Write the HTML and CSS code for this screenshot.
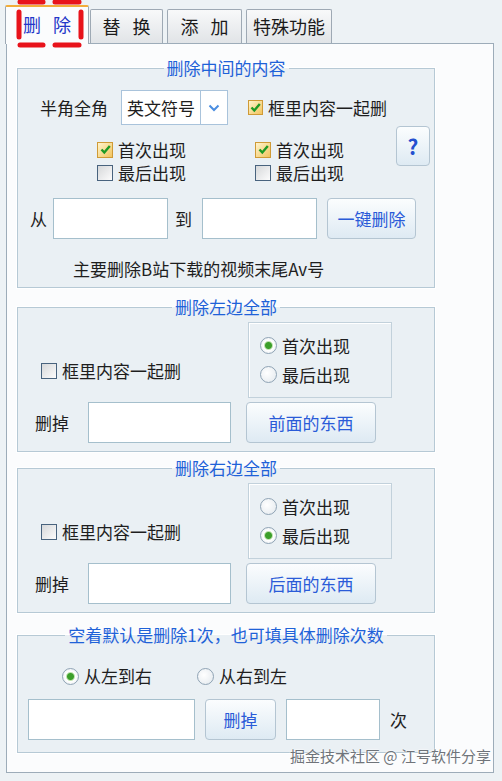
FILE: index.html
```html
<!DOCTYPE html>
<html lang="zh-CN">
<head>
    <meta charset="UTF-8">
    <meta name="viewport" content="width=device-width, initial-scale=1.0">
    <title>删除</title>
    <link rel="stylesheet" href="styles.css">
</head>
<body>
    <div class="window">
        <div class="tabs">
            <div class="tab active">删 除</div>
            <div class="tab tab-replace">替 换</div>
            <div class="tab tab-add">添 加</div>
            <div class="tab tab-special">特殊功能</div>
            <svg class="mark" width="84" height="50" viewBox="0 0 84 50">
                <g stroke="#e8131b" stroke-width="5" stroke-linecap="round" fill="none">
                    <line x1="12" y1="2" x2="35" y2="2"/>
                    <line x1="47" y1="2" x2="71" y2="2"/>
                    <line x1="12" y1="45" x2="35" y2="45"/>
                    <line x1="47" y1="45" x2="71" y2="45"/>
                    <line x1="11" y1="12" x2="11" y2="37"/>
                    <line x1="73" y1="12" x2="73" y2="37"/>
                </g>
            </svg>
        </div>

        <div class="panel">
            <!-- 删除中间 -->
            <fieldset class="group group-middle">
                <legend>删除中间的内容</legend>
                <div class="row row-mode">
                    <span class="label label-mode">半角全角</span>
                    <div class="select">
                        <span class="select-text">英文符号</span>
                        <span class="select-btn">
                            <svg width="12" height="8" viewBox="0 0 12 8"><path d="M1.5 1.5 L6 6 L10.5 1.5" stroke="#4a8de0" stroke-width="2" fill="none"/></svg>
                        </span>
                    </div>
                    <label class="check check-all">
                        <span class="box checked"><svg width="13" height="13" viewBox="0 0 13 13"><path d="M2.5 6.5 L5.3 9.5 L10.8 3" stroke="#1f9a25" stroke-width="2.4" fill="none"/></svg></span>框里内容一起删
                    </label>
                </div>
                <div class="row row-occur">
                    <div class="occur-col occur-left">
                        <label class="check">
                            <span class="box checked"><svg width="13" height="13" viewBox="0 0 13 13"><path d="M2.5 6.5 L5.3 9.5 L10.8 3" stroke="#1f9a25" stroke-width="2.4" fill="none"/></svg></span>首次出现
                        </label>
                        <label class="check"><span class="box"></span>最后出现</label>
                    </div>
                    <div class="occur-col occur-right">
                        <label class="check">
                            <span class="box checked"><svg width="13" height="13" viewBox="0 0 13 13"><path d="M2.5 6.5 L5.3 9.5 L10.8 3" stroke="#1f9a25" stroke-width="2.4" fill="none"/></svg></span>首次出现
                        </label>
                        <label class="check"><span class="box"></span>最后出现</label>
                    </div>
                    <button class="btn btn-help">?</button>
                </div>
                <div class="row row-range">
                    <span class="label label-from">从</span>
                    <input type="text" class="field field-from">
                    <span class="label label-to">到</span>
                    <input type="text" class="field field-to">
                    <button class="btn btn-onekey">一键删除</button>
                </div>
                <p class="note">主要删除B站下载的视频末尾Av号</p>
            </fieldset>

            <!-- 删除左边 -->
            <fieldset class="group group-side">
                <legend>删除左边全部</legend>
                <div class="row side-top">
                    <div class="side-check">
                        <label class="check"><span class="box"></span>框里内容一起删</label>
                    </div>
                    <div class="radio-box">
                        <label class="opt"><span class="radio on"></span>首次出现</label>
                        <label class="opt"><span class="radio"></span>最后出现</label>
                    </div>
                </div>
                <div class="row side-bottom">
                    <span class="label label-cut">删掉</span>
                    <input type="text" class="field field-cut">
                    <button class="btn btn-side">前面的东西</button>
                </div>
            </fieldset>

            <!-- 删除右边 -->
            <fieldset class="group group-side group-right">
                <legend>删除右边全部</legend>
                <div class="row side-top">
                    <div class="side-check">
                        <label class="check"><span class="box"></span>框里内容一起删</label>
                    </div>
                    <div class="radio-box">
                        <label class="opt"><span class="radio"></span>首次出现</label>
                        <label class="opt"><span class="radio on"></span>最后出现</label>
                    </div>
                </div>
                <div class="row side-bottom">
                    <span class="label label-cut">删掉</span>
                    <input type="text" class="field field-cut">
                    <button class="btn btn-side">后面的东西</button>
                </div>
            </fieldset>

            <!-- 删除次数 -->
            <fieldset class="group group-count">
                <legend>空着默认是删除1次，也可填具体删除次数</legend>
                <div class="row count-dir">
                    <label class="opt opt-ltr"><span class="radio on"></span>从左到右</label>
                    <label class="opt opt-rtl"><span class="radio"></span>从右到左</label>
                </div>
                <div class="row count-row">
                    <input type="text" class="field field-text">
                    <button class="btn btn-cut">删掉</button>
                    <input type="text" class="field field-times">
                    <span class="label label-times">次</span>
                </div>
            </fieldset>
        </div>

        <div class="watermark">掘金技术社区 @ 江号软件分享</div>
    </div>
</body>
</html>
```

FILE: styles.css
```css
* {
    box-sizing: border-box;
}
body {
    margin: 0;
    background: #edf2f5;
    font-family: "Noto Sans CJK SC", "Noto Sans", sans-serif;
    font-size: 17px;
    line-height: 20px;
    color: #1e1e1e;
}
.window {
    position: relative;
    height: 781px;
    padding: 5px 0 0 5px;
}

/* tabs */
.tabs {
    position: relative;
    z-index: 1;
    display: flex;
    align-items: flex-end;
    height: 38px;
}
.tab {
    height: 34px;
    margin-right: 4px;
    border: 1px solid #9ea9b4;
    border-bottom: none;
    border-radius: 2px 2px 0 0;
    background: linear-gradient(#f8f9fa, #e1e4e7);
    font-size: 18px;
    line-height: 32px;
    word-spacing: 8px;
    text-align: center;
    color: #1a1a1a;
}
.tab.active {
    width: 84px;
    height: 39px;
    margin-right: 1px;
    margin-bottom: -1px;
    border-top: 2px solid #f2ad3a;
    background: #fbfcfd;
    color: #2336c8;
    line-height: 35px;
}
.tab-replace { width: 73px; }
.tab-add { width: 75px; }
.tab-special { width: 86px; }
.mark {
    position: absolute;
    left: 3px;
    top: -5px;
}

/* panel */
.panel {
    width: 488px;
    height: 730px;
    margin-left: 1px;
    padding: 0 0 0 10px;
    border: 1px solid #9dacb9;
    background: #fbfcfd;
}

/* group boxes */
.group {
    width: 418px;
    margin: 0;
    padding: 0;
    min-width: 0;
    border: 1px solid #b6c9d5;
    background: #eaf0f4;
    box-shadow: 0 0 0 1px #ffffff;
}
.group legend {
    margin: 0 auto;
    padding: 0 3px;
    color: #1f62d8;
    font-size: 17px;
    line-height: 20px;
}
.row {
    display: flex;
    align-items: center;
}
.label {
    white-space: nowrap;
}

/* controls */
.check, .opt {
    display: flex;
    align-items: center;
    white-space: nowrap;
}
.box {
    display: flex;
    align-items: center;
    justify-content: center;
    width: 16px;
    height: 16px;
    margin-right: 5px;
    border: 1px solid #48637e;
    background: linear-gradient(135deg, #d6d8da, #fcfcfc);
}
.box.checked {
    border-color: #cf9a36;
    background: linear-gradient(135deg, #fff4cc, #f2c45e);
}
.radio {
    width: 17px;
    height: 17px;
    margin-right: 5px;
    border: 1px solid #8fa3b4;
    border-radius: 50%;
    background: radial-gradient(circle at 40% 40%, #ffffff, #e2e8ed);
}
.radio.on {
    background: radial-gradient(circle, #3c9f2a 0 3px, #bfe2b0 4px, #ffffff 5px, #e2e8ed 100%);
}
.field {
    height: 41px;
    margin: 0;
    padding: 0 4px;
    border: 1px solid #a5bfcc;
    background: #ffffff;
    font: inherit;
}
.btn {
    height: 41px;
    margin: 0;
    padding: 0;
    border: 1px solid #b4c5d2;
    border-radius: 4px;
    background: linear-gradient(#fbfdfe, #deeaf3);
    color: #2a5bd8;
    font-family: inherit;
    font-size: 17px;
}

/* group 1 */
.group-middle {
    margin-top: 14px;
    padding-bottom: 8px;
}
.row-mode {
    margin-top: 12px;
    height: 35px;
}
.label-mode {
    width: 68px;
    margin-left: 22px;
}
.select {
    display: flex;
    width: 107px;
    height: 35px;
    margin-left: 13px;
    border: 1px solid #a9c3db;
    background: #ffffff;
}
.select-text {
    flex: 1;
    padding-left: 5px;
    line-height: 33px;
}
.select-btn {
    display: flex;
    align-items: center;
    justify-content: center;
    width: 27px;
    border-left: 1px solid #a9c3db;
}
.check-all {
    margin-left: 20px;
}
.check-all .box {
    width: 15px;
    height: 15px;
}
.row-occur {
    align-items: flex-start;
    height: 57px;
}
.occur-col {
    padding-top: 13px;
}
.occur-col .check {
    height: 23px;
}
.occur-left {
    margin-left: 79px;
}
.occur-right {
    margin-left: 69px;
}
.btn-help {
    width: 34px;
    height: 40px;
    margin-left: 52px;
    margin-top: 1px;
    font-size: 21px;
    font-weight: bold;
    color: #2450cf;
}
.row-range {
    margin-top: 16px;
}
.label-from {
    margin-left: 12px;
}
.field-from {
    width: 115px;
    margin-left: 6px;
}
.label-to {
    margin-left: 7px;
}
.field-to {
    width: 115px;
    margin-left: 10px;
}
.btn-onekey {
    width: 89px;
    margin-left: 10px;
}
.note {
    margin: 20px 0 0 55px;
}

/* group 2, 3 */
.group-side {
    margin-top: 9px;
    padding-bottom: 8px;
}
.group-right {
    margin-top: 6px;
}
.side-top {
    margin-top: 5px;
}
.side-check {
    width: 230px;
    padding: 22px 0 0 23px;
}
.radio-box {
    display: flex;
    flex-direction: column;
    justify-content: center;
    width: 144px;
    height: 76px;
    padding-left: 11px;
    border: 1px solid #c2d1db;
    box-shadow: inset 1px 1px 0 #ffffff;
}
.radio-box .opt {
    height: 29px;
}
.side-bottom {
    margin-top: 4px;
}
.label-cut {
    margin-left: 17px;
}
.field-cut {
    width: 143px;
    margin-left: 19px;
}
.btn-side {
    width: 130px;
    margin-left: 15px;
}

/* group 4 */
.group-count {
    margin-top: 12px;
    padding-bottom: 12px;
}
.count-dir {
    margin-top: 21px;
}
.opt-ltr {
    margin-left: 44px;
}
.opt-rtl {
    margin-left: 45px;
}
.count-row {
    margin-top: 13px;
}
.field-text {
    width: 167px;
    margin-left: 10px;
}
.btn-cut {
    width: 71px;
    margin-left: 10px;
}
.field-times {
    width: 94px;
    margin-left: 10px;
}
.label-times {
    margin-left: 10px;
}

.watermark {
    position: absolute;
    left: 290px;
    top: 746px;
    font-size: 15px;
    color: #6f747a;
    text-shadow: 0 0 2px #ffffff, 0 0 2px #ffffff;
    white-space: nowrap;
}
```
